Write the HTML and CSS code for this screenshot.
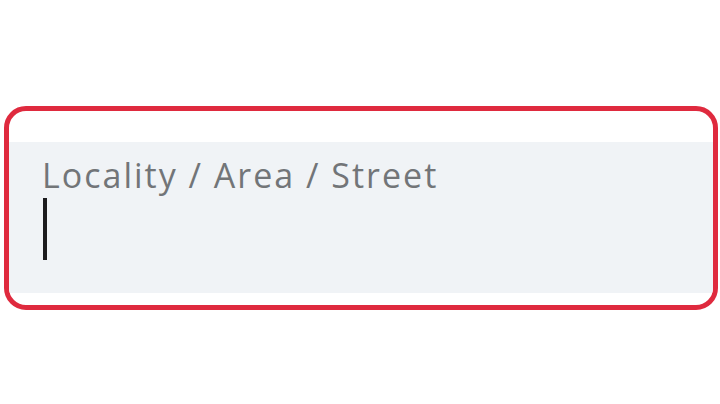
FILE: index.html
```html
<!DOCTYPE html>
<html lang="en">
<head>
    <meta charset="UTF-8">
    <title>Address</title>
    <link rel="stylesheet" href="styles.css">
</head>
<body>
<div class="page">
    <div class="field_wrap">
        <div class="field">
            <div class="field_label">Locality / Area / Street</div>
            <div class="field_caret"></div>
        </div>
    </div>
</div>
</body>
</html>
```

FILE: styles.css
```css
body {
    margin: 0;
    background: #fff;
    font-family: "Open Sans", "Lato", sans-serif;
}

.page {
    padding: 106px 2px 0 4px;
}

.field_wrap {
    border: 5px solid #df2a3e;
    border-radius: 22px;
    padding: 31px 0 12px;
    overflow: hidden;
}

.field {
    background: #f0f3f6;
    height: 151px;
    padding: 12px 0 0 33px;
    box-sizing: border-box;
}

.field_label {
    font-size: 34px;
    line-height: 42px;
    letter-spacing: 2px;
    color: #727578;
}

.field_caret {
    width: 4px;
    height: 62px;
    margin: 2px 0 0 1px;
    background: #1c1c1e;
}
```
